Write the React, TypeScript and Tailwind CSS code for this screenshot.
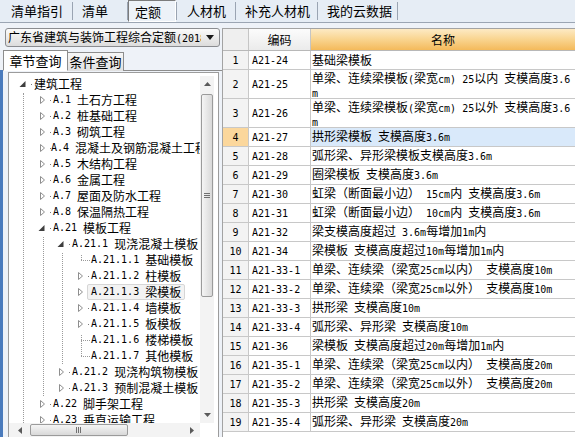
import React from 'react';

function Mixed({ text }: { text: string }) {
  const parts = text.split(/([\x20-\x7e]+)/).filter((p) => p.length > 0);
  return (
    <>
      {parts.map((p, i) =>
        /^[\x20-\x7e]+$/.test(p) ? (
          <span key={i} className="font-['DejaVu_Sans_Mono',monospace] text-[10px] whitespace-pre">
            {p}
          </span>
        ) : (
          <span key={i}>{p}</span>
        )
      )}
    </>
  );
}

const Sep = () => <div className="w-px my-[2px] bg-[#9aa4b2]" />;

type TreeItem = { level: number; code?: string; name: string; state: 'open' | 'closed' | 'leaf'; selected?: boolean };

const tree: TreeItem[] = [
  { level: 0, name: '建筑工程', state: 'open' },
  { level: 1, code: 'A.1', name: '土石方工程', state: 'closed' },
  { level: 1, code: 'A.2', name: '桩基础工程', state: 'closed' },
  { level: 1, code: 'A.3', name: '砌筑工程', state: 'closed' },
  { level: 1, code: 'A.4', name: '混凝土及钢筋混凝土工程', state: 'closed' },
  { level: 1, code: 'A.5', name: '木结构工程', state: 'closed' },
  { level: 1, code: 'A.6', name: '金属工程', state: 'closed' },
  { level: 1, code: 'A.7', name: '屋面及防水工程', state: 'closed' },
  { level: 1, code: 'A.8', name: '保温隔热工程', state: 'closed' },
  { level: 1, code: 'A.21', name: '模板工程', state: 'open' },
  { level: 2, code: 'A.21.1', name: '现浇混凝土模板', state: 'open' },
  { level: 3, code: 'A.21.1.1', name: '基础模板', state: 'leaf' },
  { level: 3, code: 'A.21.1.2', name: '柱模板', state: 'closed' },
  { level: 3, code: 'A.21.1.3', name: '梁模板', state: 'closed', selected: true },
  { level: 3, code: 'A.21.1.4', name: '墙模板', state: 'closed' },
  { level: 3, code: 'A.21.1.5', name: '板模板', state: 'closed' },
  { level: 3, code: 'A.21.1.6', name: '楼梯模板', state: 'leaf' },
  { level: 3, code: 'A.21.1.7', name: '其他模板', state: 'leaf' },
  { level: 2, code: 'A.21.2', name: '现浇构筑物模板', state: 'closed' },
  { level: 2, code: 'A.21.3', name: '预制混凝土模板', state: 'closed' },
  { level: 1, code: 'A.22', name: '脚手架工程', state: 'closed' },
  { level: 1, code: 'A.23', name: '垂直运输工程', state: 'closed' },
];

const levelPad = ['pl-[8px]', 'pl-[27px]', 'pl-[46px]', 'pl-[65px]'];

type Row = { n: string; code: string; lines: string[]; sel?: boolean };
const rows: Row[] = [
  { n: '1', code: 'A21-24', lines: ['基础梁模板'] },
  { n: '2', code: 'A21-25', lines: ['单梁、连续梁模板(梁宽cm) 25以内 支模高度3.6', 'm'] },
  { n: '3', code: 'A21-26', lines: ['单梁、连续梁模板(梁宽cm) 25以外 支模高度3.6', 'm'] },
  { n: '4', code: 'A21-27', lines: ['拱形梁模板 支模高度3.6m'], sel: true },
  { n: '5', code: 'A21-28', lines: ['弧形梁、异形梁模板支模高度3.6m'] },
  { n: '6', code: 'A21-29', lines: ['圈梁模板 支模高度3.6m'] },
  { n: '7', code: 'A21-30', lines: ['虹梁（断面最小边） 15cm内 支模高度3.6m'] },
  { n: '8', code: 'A21-31', lines: ['虹梁（断面最小边） 10cm内 支模高度3.6m'] },
  { n: '9', code: 'A21-32', lines: ['梁支模高度超过 3.6m每增加1m内'] },
  { n: '10', code: 'A21-34', lines: ['梁模板 支模高度超过10m每增加1m内'] },
  { n: '11', code: 'A21-33-1', lines: ['单梁、连续梁（梁宽25cm以内） 支模高度10m'] },
  { n: '12', code: 'A21-33-2', lines: ['单梁、连续梁（梁宽25cm以外） 支模高度10m'] },
  { n: '13', code: 'A21-33-3', lines: ['拱形梁 支模高度10m'] },
  { n: '14', code: 'A21-33-4', lines: ['弧形梁、异形梁 支模高度10m'] },
  { n: '15', code: 'A21-36', lines: ['梁模板 支模高度超过20m每增加1m内'] },
  { n: '16', code: 'A21-35-1', lines: ['单梁、连续梁（梁宽25cm以内） 支模高度20m'] },
  { n: '17', code: 'A21-35-2', lines: ['单梁、连续梁（梁宽25cm以外） 支模高度20m'] },
  { n: '18', code: 'A21-35-3', lines: ['拱形梁 支模高度20m'] },
  { n: '19', code: 'A21-35-4', lines: ['弧形梁、异形梁 支模高度20m'] },
];

function Expander({ state }: { state: TreeItem['state'] }) {
  return (
    <span className="w-[12px] h-[16px] flex items-center justify-center">
      {state === 'closed' && (
        <svg width="12" height="16" viewBox="0 0 12 16">
          <path d="M4.5 4.5 L8.5 8 L4.5 11.5 Z" fill="#ffffff" stroke="#8e8e8e" strokeWidth="1" />
        </svg>
      )}
      {state === 'open' && (
        <svg width="12" height="16" viewBox="0 0 12 16">
          <path d="M8.5 5 L8.5 11 L2.5 11 Z" fill="#3e3e3e" />
        </svg>
      )}
    </span>
  );
}

const VLine = ({ cls }: { cls: string }) => (
  <div className={`absolute w-0 border-l border-dotted border-[#9a9a9a] ${cls}`} />
);
const HLine = ({ cls }: { cls: string }) => (
  <div className={`absolute h-0 border-t border-dotted border-[#9a9a9a] ${cls}`} />
);

export default function App() {
  return (
    <div className="w-[575px] h-[437px] overflow-hidden flex flex-col font-['Noto_Sans_CJK_SC',sans-serif] text-black bg-[#eef2f8]">
      {/* top tab bar */}
      <div className="h-[23px] flex bg-[#e6edf5] border-b border-[#9ba5b3] text-[13px] leading-[22px] shrink-0">
        <div className="w-[72px] pl-[11px]">清单指引</div>
        <Sep />
        <div className="w-[54px] pl-[9px]">清单</div>
        <Sep />
        <div className="w-[48px] h-[22px] pl-[6px] pt-[1px] border-l border-t border-l-[#7c7c7c] border-t-[#7c7c7c] border-r border-b border-r-white border-b-white bg-[#edf2f8] leading-[20px]">
          定额
        </div>
        <Sep />
        <div className="w-[58px] pl-[10px]">人材机</div>
        <Sep />
        <div className="w-[81px] pl-[9px]">补充人材机</div>
        <Sep />
        <div className="w-[79px] pl-[9px]">我的云数据</div>
        <Sep />
      </div>

      <div className="flex-1 flex min-h-0">
        {/* left panel */}
        <div className="w-[222px] flex flex-col bg-[#eef2f8]">
          <div className="pt-[5px] pl-[5px] pr-[2px]">
            <div className="h-[19px] rounded-[3px] border border-[#8a8c90] bg-linear-to-b from-[#fbfbfb] to-[#dcdcdc] flex items-center pl-[2px] text-[12px] leading-[17px]">
              <span className="w-[193px] overflow-hidden whitespace-nowrap">
                <Mixed text="广东省建筑与装饰工程综合定额(2018)" />
              </span>
              <span className="flex-1 flex justify-center">
                <svg width="8" height="5" viewBox="0 0 8 5">
                  <path d="M0 0 L8 0 L4 5 Z" fill="#1a1a1a" />
                </svg>
              </span>
            </div>
          </div>

          <div className="flex items-end mt-[3px] h-[21px] pl-[3px] -mb-px relative z-10 text-[13px]">
            <div className="w-[65px] h-[21px] bg-white border border-[#8d8d8d] border-b-white flex items-center justify-center leading-[18px]">
              章节查询
            </div>
            <div className="w-[56px] h-[19px] border border-l-0 border-b-0 border-[#8d8d8d] bg-linear-to-b from-[#f6f6f6] to-[#e1e1e1] flex items-center justify-center leading-[18px]">
              条件查询
            </div>
          </div>

          <div className="flex-1 flex min-h-0">
            <div className="w-[3px] bg-[#4a7bbd]" />
            <div className="flex-1 border-t border-[#8d8d8d] pl-[5px] pt-[1px]">
              <div className="w-[211px] h-[366px] border border-[#9c9c9c] bg-white flex flex-col">
                <div className="h-[350px] flex">
                  {/* tree content */}
                  <div className="w-[191px] relative overflow-hidden pt-[3px] text-[12px]">
                    <VLine cls="left-[14px] top-[20px] h-[340px]" />
                    <VLine cls="left-[34px] top-[164px] h-[159px]" />
                    <VLine cls="left-[53px] top-[180px] h-[111px]" />
                    <VLine cls="left-[72px] top-[182px] h-[5px]" />
                    <HLine cls="left-[72px] top-[187px] w-[9px]" />
                    <VLine cls="left-[72px] top-[262px] h-[21px]" />
                    <HLine cls="left-[72px] top-[267px] w-[9px]" />
                    <HLine cls="left-[72px] top-[283px] w-[9px]" />
                    {tree.map((t, i) => (
                      <div key={i} className={`h-[16px] flex items-center whitespace-nowrap ${levelPad[t.level]}`}>
                        {t.state === 'leaf' ? <span className="w-[12px] h-[16px]" /> : <Expander state={t.state} />}
                        <span className="w-[5px] h-[16px] flex items-center">
                          {t.state !== 'leaf' && <span className="ml-[2px] w-px h-px bg-[#7a7a7a]" />}
                        </span>
                        {t.selected ? (
                          <span className="-ml-[4px] h-[16px] pl-[3px] pr-[3px] border border-[#d6d6d6] bg-[#f3f3f3] rounded-[2px] flex items-center leading-[14px]">
                            <span className="font-['DejaVu_Sans_Mono',monospace] text-[10px] whitespace-pre">{t.code + ' '}</span>
                            <span>{t.name}</span>
                          </span>
                        ) : (
                          <span className="leading-[16px] flex items-center">
                            {t.code && (
                              <span className="font-['DejaVu_Sans_Mono',monospace] text-[10px] whitespace-pre">{t.code + ' '}</span>
                            )}
                            <span>{t.name}</span>
                          </span>
                        )}
                      </div>
                    ))}
                  </div>
                  {/* vertical scrollbar */}
                  <div className="w-[14px] mt-[3px] mr-[4px] bg-[#f3f3f3] flex flex-col">
                    <div className="h-[16px] flex items-center justify-center">
                      <svg width="7" height="4" viewBox="0 0 7 4">
                        <path d="M0 4 L3.5 0 L7 4 Z" fill="#5a5a5a" />
                      </svg>
                    </div>
                    <div className="mt-[2px] h-[203px] mx-[1px] rounded-[2px] border border-[#9b9b9b] bg-linear-to-r from-[#f5f5f5] to-[#d9d9d9] flex items-center justify-center">
                      <svg width="6" height="6" viewBox="0 0 6 6">
                        <path d="M0 0.5 H6 M0 2.5 H6 M0 4.5 H6" stroke="#707070" strokeWidth="1" />
                      </svg>
                    </div>
                    <div className="flex-1" />
                    <div className="h-[16px] flex items-center justify-center">
                      <svg width="7" height="4" viewBox="0 0 7 4">
                        <path d="M0 0 L3.5 4 L7 0 Z" fill="#5a5a5a" />
                      </svg>
                    </div>
                  </div>
                </div>
                {/* horizontal scrollbar */}
                <div className="h-[14px] flex">
                  <div className="w-[191px] bg-[#f3f3f3] flex items-stretch pl-[3px]">
                    <div className="w-[16px] flex items-center justify-center">
                      <svg width="4" height="7" viewBox="0 0 4 7">
                        <path d="M4 0 L0 3.5 L4 7 Z" fill="#5a5a5a" />
                      </svg>
                    </div>
                    <div className="ml-[2px] w-[98px] my-[1px] rounded-[2px] border border-[#9b9b9b] bg-linear-to-b from-[#f5f5f5] to-[#d9d9d9] flex items-center justify-center">
                      <svg width="6" height="6" viewBox="0 0 6 6">
                        <path d="M0.5 0 V6 M2.5 0 V6 M4.5 0 V6" stroke="#707070" strokeWidth="1" />
                      </svg>
                    </div>
                    <div className="flex-1" />
                    <div className="w-[16px] flex items-center justify-center">
                      <svg width="4" height="7" viewBox="0 0 4 7">
                        <path d="M0 0 L4 3.5 L0 7 Z" fill="#5a5a5a" />
                      </svg>
                    </div>
                  </div>
                  <div className="flex-1 bg-white" />
                </div>
              </div>
            </div>
          </div>
        </div>

        {/* right panel */}
        <div className="flex-1 flex flex-col pt-[5px] bg-[#eef2f8] min-w-0">
          <div className="flex-1 bg-white border-l border-t border-[#a3a3a3] text-[12px] overflow-hidden">
            <div className="flex h-[22px] border-b border-[#b8b8b8]">
              <div className="w-[26px] border-r border-[#c5c5c5] bg-[#efefef]" />
              <div className="w-[62px] border-r border-[#c5c5c5] bg-linear-to-b from-[#fcfcfc] to-[#ebebeb] flex items-center justify-center leading-[20px]">
                编码
              </div>
              <div className="flex-1 bg-linear-to-b from-[#fdeac4] via-[#f9d48e] to-[#f4ba5a] flex items-center justify-center leading-[20px]">
                名称
              </div>
            </div>
            {rows.map((r) => {
              const tall = r.lines.length > 1;
              return (
                <div key={r.n} className={`flex border-b border-[#c8c8c8] ${tall ? 'h-[29px]' : 'h-[19px]'}`}>
                  <div
                    className={`w-[26px] border-r border-[#c8c8c8] flex items-center justify-center font-['DejaVu_Sans_Mono',monospace] text-[10px] ${
                      r.sel ? 'bg-[#fbd79c]' : 'bg-[#f3f3f3]'
                    }`}
                  >
                    {r.n}
                  </div>
                  <div className="w-[62px] border-r border-[#c8c8c8] flex items-center pl-[3px] font-['DejaVu_Sans_Mono',monospace] text-[10px] whitespace-pre">
                    {r.code}
                  </div>
                  <div
                    className={`flex-1 min-w-0 pl-[1px] overflow-hidden whitespace-nowrap ${
                      r.sel ? 'bg-[#d9e9fa]' : ''
                    } ${tall ? 'pt-[1px] leading-[14px]' : 'flex items-center leading-[18px]'}`}
                  >
                    {tall ? (
                      r.lines.map((l, i) => (
                        <div key={i} className="h-[14px]">
                          <Mixed text={l} />
                        </div>
                      ))
                    ) : (
                      <span>
                        <Mixed text={r.lines[0]} />
                      </span>
                    )}
                  </div>
                </div>
              );
            })}
          </div>
        </div>
      </div>
    </div>
  );
}
